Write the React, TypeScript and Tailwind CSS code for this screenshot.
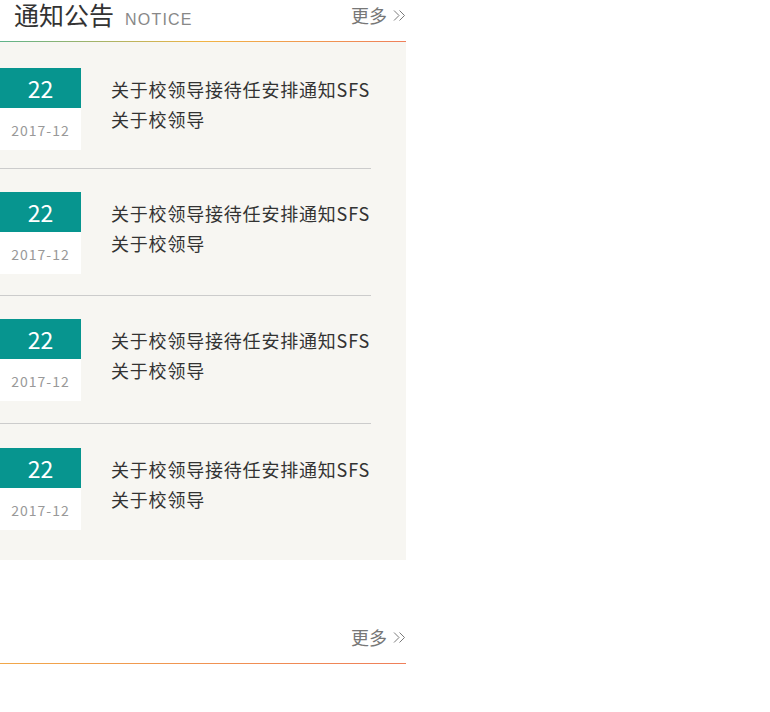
import React from "react";

const items = [
  { pt: "pt-[26px]", pb: "pb-[18px] border-b border-[#cccccc]" },
  { pt: "pt-[23px]", pb: "pb-[21px] border-b border-[#cccccc]" },
  { pt: "pt-[23px]", pb: "pb-[22px] border-b border-[#cccccc]" },
  { pt: "pt-[24px]", pb: "pb-[30px]" },
];

function More() {
  return (
    <a className="flex items-center gap-[6px] text-[18px] leading-[30px] text-[#777]">
      <span>更多</span>
      <svg width="13" height="13" viewBox="0 0 13 13" fill="none" stroke="#7a7a7a" strokeWidth="1">
        <path d="M1 1.5 L6 6.5 L1 11.5" />
        <path d="M6.5 1.5 L11.5 6.5 L6.5 11.5" />
      </svg>
    </a>
  );
}

export default function App() {
  return (
    <div
      className="w-[406px] bg-white"
      style={{ fontFamily: '"Noto Sans CJK SC", "Noto Sans", sans-serif' }}
    >
      <div className="h-[41px] flex items-start justify-between">
        <div className="flex items-baseline pl-[14px]">
          <span className="text-[25px] leading-[29px] text-[#333]">通知公告</span>
          <span
            className="ml-[11px] text-[16px] tracking-[1.2px] text-[#888]"
            style={{ fontFamily: '"Liberation Sans", Arial, sans-serif' }}
          >
            NOTICE
          </span>
        </div>
        <More />
      </div>
      <div className="h-px bg-[linear-gradient(to_right,#5eb38a,#f1b445_50%,#ef7f5a)]" />
      <div className="bg-[#f7f6f2] pr-[35px]">
        {items.map((it, idx) => (
          <div key={idx} className={"flex " + it.pt + " " + it.pb}>
            <div className="w-[81px] shrink-0">
              <div className="h-[40px] bg-[#07958f] text-white text-[23px] flex items-center justify-center">
                22
              </div>
              <div className="h-[42px] bg-white text-[#999] text-[14px] tracking-[1px] flex items-center justify-center pt-[2px]">
                2017-12
              </div>
            </div>
            <div className="ml-[30px] mt-[6px] flex-1 text-[18px] tracking-[0.8px] leading-[30px] text-[#333] break-all">
              关于校领导接待任安排通知SFS关于校领导
            </div>
          </div>
        ))}
      </div>
      <div className="mt-[62px] h-[41px] flex items-start justify-end">
        <More />
      </div>
      <div className="h-px bg-[linear-gradient(to_right,#f1a84a,#ef7f5a)]" />
    </div>
  );
}
